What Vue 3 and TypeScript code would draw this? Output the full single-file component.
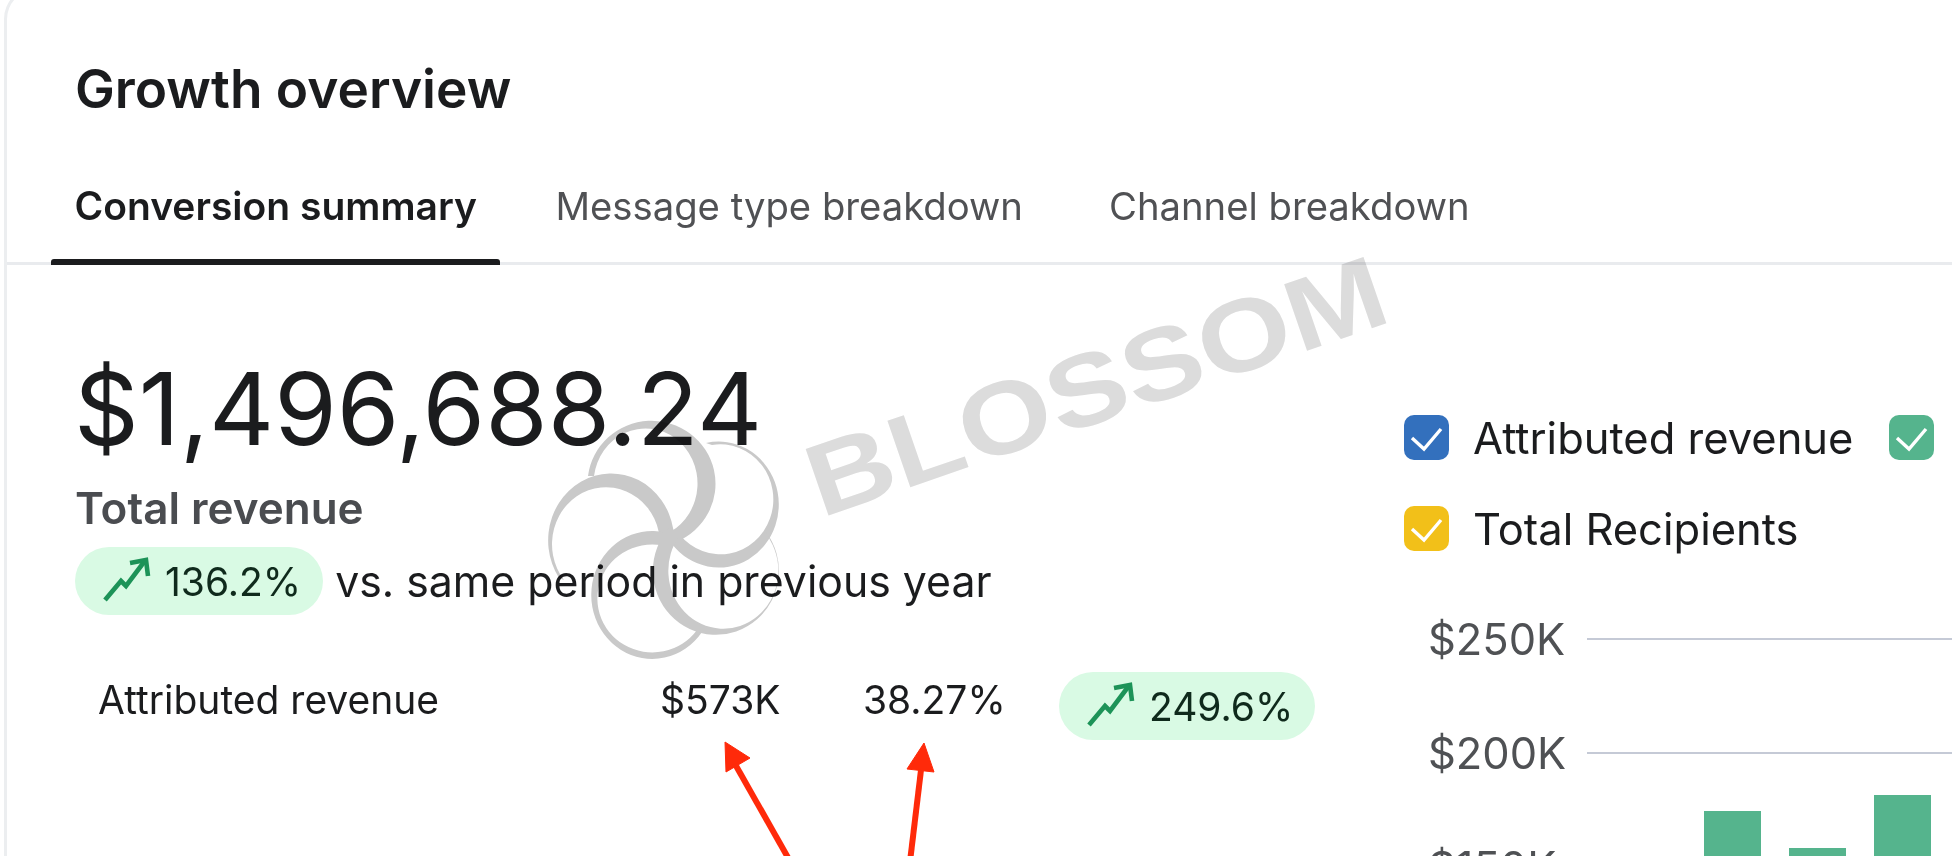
<script setup lang="ts">
const tabs: { label: string; active?: boolean }[] = [
  { label: 'Conversion summary', active: true },
  { label: 'Message type breakdown' },
  { label: 'Channel breakdown' },
]
const legend = [
  { label: 'Attributed revenue', cls: 'blue' },
  { label: '', cls: 'green' },
  { label: 'Total Recipients', cls: 'yellow' },
]
const ticks = ['$250K', '$200K', '$150K']
const bars = [
  { cls: 'b1' },
  { cls: 'b2' },
  { cls: 'b3' },
]
</script>

<template>
  <div class="page">
    <section class="card">
      <h1 class="title">Growth overview</h1>
      <nav class="tabs">
        <div v-for="t in tabs" :key="t.label" class="tab" :class="{ active: t.active }">{{ t.label }}</div>
      </nav>
      <div class="content">
        <div class="left">
          <div class="amount">$1,496,688.24</div>
          <div class="sub">Total revenue</div>
          <div class="compare">
            <span class="pill">
              <svg class="trend" viewBox="0 0 48 48" fill="none" stroke="#1d9358" stroke-width="4.6">
                <path d="M2 43 18 24 23 29 41 5" />
                <path d="M27 6 43 3 45 19" />
              </svg>
              136.2%
            </span>
            <span class="vs">vs. same period in previous year</span>
          </div>
          <div class="row">
            <span class="row-name">Attributed revenue</span>
            <span class="row-val">$573K</span>
            <span class="row-pct">38.27%</span>
            <span class="pill">
              <svg class="trend" viewBox="0 0 48 48" fill="none" stroke="#1d9358" stroke-width="4.6">
                <path d="M2 43 18 24 23 29 41 5" />
                <path d="M27 6 43 3 45 19" />
              </svg>
              249.6%
            </span>
          </div>
        </div>
        <div class="right">
          <div class="legend">
            <div v-for="l in legend" :key="l.cls" class="legend-item">
              <span class="check" :class="l.cls">
                <svg viewBox="0 0 45 45" fill="none" stroke="#fff" stroke-width="3.4">
                  <path d="M8 23 20 34 37 14" />
                </svg>
              </span>
              <span v-if="l.label">{{ l.label }}</span>
            </div>
          </div>
          <div class="chart">
            <div v-for="t in ticks" :key="t" class="tick">
              <span class="tick-label">{{ t }}</span>
              <span class="tick-line"></span>
            </div>
            <span v-for="b in bars" :key="b.cls" class="bar" :class="b.cls"></span>
          </div>
        </div>
      </div>
    </section>

    <svg class="overlay" width="1952" height="856" viewBox="0 0 1952 856">
      <g fill="#c9c9c9">
        <path d="M588 476A64 63 0 1 1 676 542L670 532A52 55 0 1 0 594 476Z" />
        <path d="M706 443A60 63 0 1 1 672 544L680 535A53 55 0 1 0 712 445Z" />
        <path d="M559 578A63 67 0 1 1 674 545L660 545A54 57 0 1 0 564 580Z" />
        <path d="M676 536A61 64 0 1 0 702 632L697 630A55 54 0 1 1 672 548Z" />
        <path d="M766 532A63 64 0 1 1 670 527L680 535A55 58 0 1 0 770 540Z" />
      </g>
      <text class="wm" x="0" y="0" transform="translate(821 518) rotate(-19) scale(1.175 1)">BLOSSOM</text>
      <g fill="#ff2a0a" stroke="#ff2a0a">
        <path d="M725 742 750 758 726 772Z" />
        <path d="M735 764 795 870" stroke-width="6" />
        <path d="M924 743 907 769 934 772Z" />
        <path d="M921 770 909 870" stroke-width="6" />
      </g>
    </svg>
  </div>
</template>

<style scoped>
.page {
  position: relative;
  width: 1952px;
  height: 856px;
  overflow: hidden;
  background: #fff;
  font-family: Inter, "Liberation Sans", sans-serif;
  color: #1b1c1e;
}
.card {
  margin: -13px 0 0 4px;
  height: 900px;
  border: 3px solid #eceef0;
  border-right: none;
  border-bottom: none;
  border-top-left-radius: 32px;
  box-sizing: border-box;
}
.title {
  margin: 0;
  padding: 63px 0 0 68px;
  font-size: 53.2px;
  line-height: 72px;
  font-weight: 600;
}
.tabs {
  display: flex;
  margin-top: 42px;
  height: 95px;
  padding-left: 44px;
  border-bottom: 3px solid #e9ebee;
}
.tab {
  position: relative;
  margin-right: 30px;
  padding: 11px 25px 0;
  font-size: 38.25px;
  line-height: 56px;
  color: #505154;
}
.tab:nth-child(2) {
  margin-right: 36px;
}
.tab.active {
  margin-right: 30px;
  padding: 11px 23.5px 0;
  color: #1b1c1e;
  font-weight: 600;
  font-size: 39px;
}
.tab.active::after {
  content: "";
  position: absolute;
  left: 0;
  right: 0;
  top: 92px;
  height: 6px;
  border-radius: 3px 3px 0 0;
  background: #1b1c1e;
}
.content {
  display: flex;
}
.left {
  flex: none;
  width: 1397px;
  padding: 83px 0 0 69px;
  box-sizing: border-box;
}
.amount {
  margin-left: -2px;
  font-size: 101px;
  line-height: 120px;
}
.sub {
  margin: 12px 0 0 -1px;
  font-size: 44px;
  line-height: 56px;
  font-weight: 600;
  color: #4a4c50;
}
.compare {
  display: flex;
  align-items: center;
  gap: 12px;
  margin: 11px 0 0 -1px;
}
.pill {
  display: inline-flex;
  align-items: center;
  gap: 14px;
  height: 68px;
  padding: 0 22px 0 28px;
  border-radius: 34px;
  background: #d9fae4;
  font-size: 39px;
  color: #0f2a1c;
}
.trend {
  width: 48px;
  height: 48px;
  flex: none;
}
.vs {
  font-size: 42.8px;
}
.row {
  display: flex;
  align-items: center;
  margin-top: 57px;
  padding-left: 22px;
  font-size: 39px;
}
.row > span:not(.pill) {
  margin-bottom: 13px;
}
.row-name {
  width: 562px;
}
.row-val {
  width: 203px;
}
.row-pct {
  width: 196px;
}
.right {
  flex: 1;
  min-width: 0;
  padding-top: 150px;
}
.legend {
  display: flex;
  flex-wrap: wrap;
  width: 600px;
  row-gap: 46px;
}
.legend-item {
  display: flex;
  align-items: center;
  gap: 24px;
  height: 45px;
  margin-right: 36px;
  font-size: 43.5px;
}
.check {
  width: 45px;
  height: 45px;
  border-radius: 10px;
  flex: none;
}
.check svg {
  display: block;
  width: 45px;
  height: 45px;
}
.blue { background: #3370bd; }
.green { background: #55b48d; }
.yellow { background: #f2c019; }
.chart {
  position: relative;
  margin-top: 31px;
  margin-left: 24px;
}
.tick {
  display: flex;
  align-items: center;
  height: 114px;
}
.tick-label {
  width: 137px;
  font-size: 43.4px;
  color: #4f5154;
  white-space: nowrap;
}
.tick-line {
  flex: 1;
  height: 2px;
  margin-left: 22px;
  background: #c5cad6;
}
.bar {
  position: absolute;
  width: 57px;
  height: 300px;
  background: #55b48d;
}
.b1 { left: 276px; top: 229px; }
.b2 { left: 361px; top: 266px; }
.b3 { left: 446px; top: 213px; }
.overlay {
  position: absolute;
  left: 0;
  top: 0;
  mix-blend-mode: multiply;
}
.wm {
  font-family: "Liberation Sans", sans-serif;
  font-weight: 700;
  font-size: 102px;
  fill: #dcdcdc;
}
</style>
